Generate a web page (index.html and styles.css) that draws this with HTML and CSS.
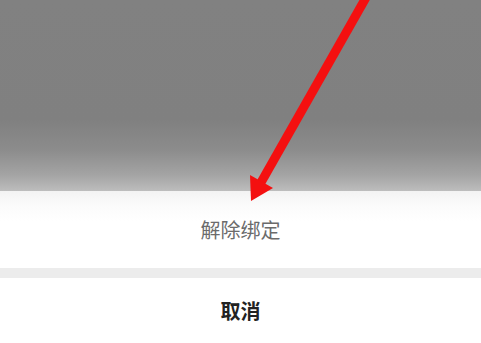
FILE: index.html
```html
<!DOCTYPE html>
<html lang="zh">
<head>
<meta charset="utf-8">
<link rel="stylesheet" href="styles.css">
</head>
<body>
<div class="screen">
  <div class="backdrop"></div>
  <div class="sheet">
    <div class="item">解除绑定</div>
    <div class="divider"></div>
    <div class="cancel">取消</div>
  </div>
  <svg class="arrow" width="481" height="343" viewBox="0 0 481 343">
    <line x1="368" y1="-6" x2="259" y2="186" stroke="#f41010" stroke-width="9"/>
    <polygon points="251,201 250,175 273,188" fill="#f41010"/>
  </svg>
</div>
</body>
</html>
```
FILE: styles.css
```css
html, body {
  margin: 0;
  padding: 0;
}
body {
  width: 481px;
  height: 343px;
  overflow: hidden;
  font-family: "Noto Sans CJK SC", "Noto Sans", sans-serif;
}
.screen {
  position: relative;
  width: 481px;
  height: 343px;
  display: flex;
  flex-direction: column;
  background: #fff;
}
.backdrop {
  height: 191px;
  flex: none;
  background: linear-gradient(to bottom, #818181 0px, #808080 120px, #8c8c8c 150px, #a4a4a4 175px, #bdbdbd 191px);
}
.sheet {
  flex: 1;
  display: flex;
  flex-direction: column;
  background: #fff;
}
.item {
  height: 77px;
  display: flex;
  align-items: center;
  justify-content: center;
  font-size: 20px;
  color: #6b6b6b;
  background: linear-gradient(to bottom, #f3f3f3 0px, #fbfbfb 14px, #fff 30px);
}
.divider {
  height: 10px;
  background: #ececec;
}
.cancel {
  flex: 1;
  display: flex;
  align-items: center;
  justify-content: center;
  font-size: 20px;
  font-weight: bold;
  color: #222;
}
.arrow {
  position: absolute;
  left: 0;
  top: 0;
}
```
